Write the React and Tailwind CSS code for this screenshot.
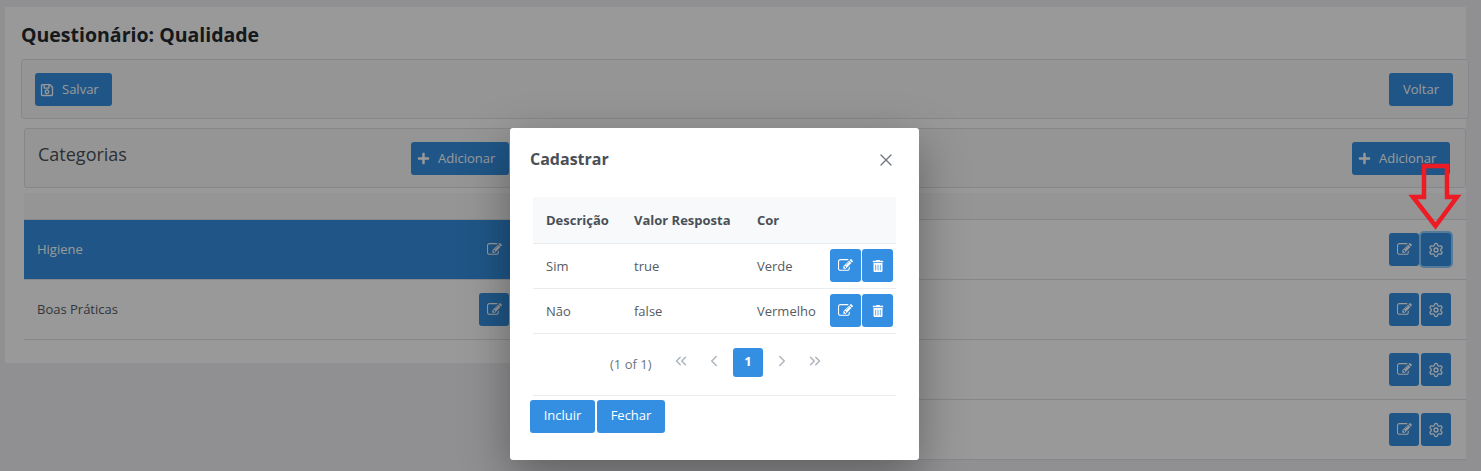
import React from 'react';
import { FaPlus, FaRegSave, FaTrashAlt } from 'react-icons/fa';
import { ChevronLeft, ChevronRight, ChevronsLeft, ChevronsRight, Settings, X } from 'lucide-react';

// pencil-in-square, outline box with a solid pencil
function EditIcon() {
  return (
    <svg width="15" height="15" viewBox="0 0 1792 1792" fill="currentColor">
      <path d="M888 1184l116-116-152-152-116 116v56h96v96h56zm440-720q-16-16-33 1l-350 350q-17 17-1 33t33-1l350-350q17-17 1-33zm80 594v190q0 119-84.500 203.500t-203.500 84.500h-832q-119 0-203.500-84.500t-84.500-203.500v-832q0-119 84.500-203.500t203.500-84.500h832q63 0 117 25 15 7 18 23 3 17-9 29l-49 49q-14 14-32 8-23-6-45-6h-832q-66 0-113 47t-47 113v832q0 66 47 113t113 47h832q66 0 113-47t47-113v-126q0-13 9-22l64-64q15-15 35-7t20 29zm-96-738l288 288-672 672h-288v-288zm444 132l-92 92-288-288 92-92q28-28 68-28t68 28l152 152q28 28 28 68t-28 68z" />
    </svg>
  );
}

function Btn({ className = '', children }) {
  return (
    <button className={`h-[33px] bg-[#348fe2] text-white text-[13px] rounded-[3px] flex items-center justify-center ${className}`}>
      {children}
    </button>
  );
}

function AddBtn() {
  return (
    <Btn className="w-[98px] gap-[8px] justify-start pl-[6px]"><FaPlus size={13} />Adicionar</Btn>
  );
}

function LeftRow({ label, active }) {
  return (
    <div className={`h-[60px] flex items-center justify-between pl-[13px] pr-[16px] border-b border-[#dee2e6] text-[13px] ${active ? 'bg-[#348fe2] text-white' : 'bg-white text-[#555b61]'}`}>
      <span>{label}</span>
      <Btn className="w-[30px]"><EditIcon /></Btn>
    </div>
  );
}

function RightRow({ focused }) {
  return (
    <div className="h-[60px] flex items-center justify-end gap-[2px] pr-[15px] bg-white border-b border-[#dee2e6]">
      <Btn className="w-[30px]"><EditIcon /></Btn>
      <Btn className={`w-[30px] ${focused ? 'ring-2 ring-[#8dcdff]' : ''}`}><Settings size={16} /></Btn>
    </div>
  );
}

function AnswerRow({ desc, value, color }) {
  return (
    <tr className="h-[45px] border-b border-[#e9ecef] text-[#555b61]">
      <td className="pl-[13px] pt-[2px]">{desc}</td>
      <td className="pl-[13px] pt-[2px]">{value}</td>
      <td className="pl-[13px] pt-[2px]">{color}</td>
      <td>
        <div className="flex justify-end gap-px pr-[3px]">
          <Btn className="w-[31px]"><EditIcon /></Btn>
          <Btn className="w-[31px]"><FaTrashAlt size={12} /></Btn>
        </div>
      </td>
    </tr>
  );
}

export default function App() {
  return (
    <div className="relative h-[471px] overflow-hidden bg-[#f0f1f3] font-['Open_Sans',sans-serif] pt-[7px]">
      <div className="ml-[5px] w-[1461px] h-[356px] bg-white">
        <h1 className="h-[52px] pl-[16px] pt-[13px] text-[19.5px] leading-[30px] font-bold text-[#242a30]">Questionário: Qualidade</h1>

        <div className="ml-[16px] w-[1448px] h-[60px] bg-[#f8f9fa] border border-[#dee2e6] rounded-[3px] flex justify-between pl-[13px] pr-[15px] pt-[13px]">
          <Btn className="w-[77px] gap-[8px] justify-start pl-[5px]"><FaRegSave size={14} />Salvar</Btn>
          <Btn className="w-[64px]">Voltar</Btn>
        </div>

        <div className="ml-[19px] mt-[9px] w-[1442px] h-[60px] bg-[#f8f9fa] border border-[#dee2e6] rounded-[3px] flex pt-[13px]">
          <div className="w-[484px] pl-[13px] flex justify-between">
            <h2 className="text-[18px] leading-[25px] text-[#495057]">Categorias</h2>
            <AddBtn />
          </div>
          <div className="flex-1 flex justify-end pr-[15px]">
            <AddBtn />
          </div>
        </div>

        <div className="ml-[19px] mt-[5px] w-[1442px] flex gap-[5px]">
          <div className="w-[501px]">
            <div className="h-[27px] bg-[#f8f9fa] border-b border-[#dee2e6]" />
            <LeftRow label="Higiene" active />
            <LeftRow label="Boas Práticas" />
          </div>
          <div className="flex-1">
            <div className="h-[27px] bg-[#f8f9fa] border-b border-[#dee2e6]" />
            <RightRow focused />
            <RightRow />
            <RightRow />
            <RightRow />
          </div>
        </div>
      </div>

      {/* dialog mask */}
      <div className="absolute inset-0 bg-black/40" />

      <div className="absolute left-[510px] top-[128px] w-[409px] h-[332px] bg-white rounded-[3px] shadow-[0_16px_48px_rgba(0,0,0,0.35)]">
        <div className="h-[69px] pl-[20px] pr-[23px] pt-[19px] flex justify-between">
          <h3 className="text-[16px] leading-[24px] font-bold text-[#495057]">Cadastrar</h3>
          <X size={20} strokeWidth={1.5} className="text-[#6c757d] mt-[3px]" />
        </div>

        <table className="ml-[23px] w-[363px] table-fixed text-[13px] border-collapse">
          <colgroup>
            <col className="w-[88px]" />
            <col className="w-[123px]" />
            <col className="w-[80px]" />
            <col />
          </colgroup>
          <thead>
            <tr className="h-[46px] bg-[#f8f9fa] border-b border-[#e9ecef] text-left text-[#495057]">
              <th className="pl-[13px] pt-[2px] font-bold">Descrição</th>
              <th className="pl-[13px] pt-[2px] font-bold">Valor Resposta</th>
              <th className="pl-[13px] pt-[2px] font-bold">Cor</th>
              <th />
            </tr>
          </thead>
          <tbody>
            <AnswerRow desc="Sim" value="true" color="Verde" />
            <AnswerRow desc="Não" value="false" color="Vermelho" />
          </tbody>
        </table>

        <div className="ml-[100px] mt-[14px] h-[29px] flex items-center text-[#adb5bd]">
          <span className="text-[13px] text-[#6c757d] mt-[6px] w-[62px]">(1 of 1)</span>
          <ChevronsLeft size={18} strokeWidth={2} className="-mt-[2px]" />
          <ChevronLeft size={18} strokeWidth={2} className="ml-[15px] -mt-[2px]" />
          <span className="ml-[10px] w-[30px] h-[29px] rounded-[3px] bg-[#348fe2] text-white text-[13px] font-bold flex items-center justify-center">1</span>
          <ChevronRight size={18} strokeWidth={2} className="ml-[10px] -mt-[2px]" />
          <ChevronsRight size={18} strokeWidth={2} className="ml-[15px] -mt-[2px]" />
        </div>

        <div className="ml-[23px] mt-[18px] w-[363px] border-t border-[#e9ecef]" />

        <div className="pl-[20px] pt-[4px] flex gap-[2px]">
          <Btn className="w-[65px]">Incluir</Btn>
          <Btn className="w-[68px]">Fechar</Btn>
        </div>
      </div>

      {/* red annotation arrow */}
      <svg className="absolute left-[1405px] top-[160px]" width="60" height="74" viewBox="0 0 60 74" fill="none">
        <path d="M19 6H42V37H52L30.500 66L8 37H19Z" stroke="#ed1c24" strokeWidth="4.500" strokeLinejoin="miter" />
      </svg>
    </div>
  );
}
